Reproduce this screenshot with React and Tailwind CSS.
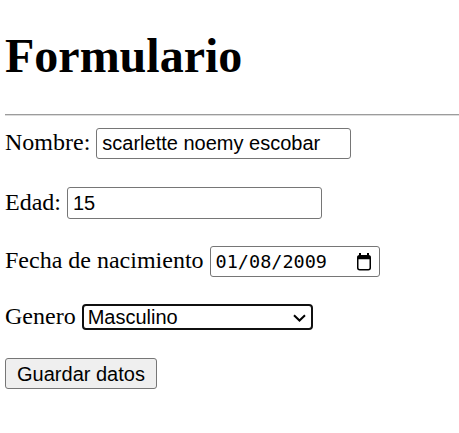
import { useState } from "react";

function CalendarIcon() {
  return (
    <svg width="16" height="18" viewBox="0 0 16 18" className="shrink-0">
      <rect x="3" y="0" width="2" height="4" fill="#000" />
      <rect x="11" y="0" width="2" height="4" fill="#000" />
      <rect x="1.75" y="2.75" width="12.5" height="14" rx="2" fill="none" stroke="#000" strokeWidth="1.5" />
      <rect x="1.75" y="2.75" width="12.5" height="3.5" fill="#000" />
    </svg>
  );
}

export default function App() {
  const [nombre, setNombre] = useState("scarlette noemy escobar");
  const [edad, setEdad] = useState("15");
  const [genero, setGenero] = useState("Masculino");

  return (
    <div className="min-h-screen bg-white text-black pl-[5px] font-['Liberation_Serif',serif] text-[24px]">
      <h1 className="pt-[29px] text-[48px] leading-[53px] font-bold">Formulario</h1>
      <hr className="mt-[32px] h-[2px] border-0 border-t border-b border-t-[#9c9c9c] border-b-[#dcdcdc]" />

      <form onSubmit={(e) => e.preventDefault()}>
        <div className="mt-[12px] flex items-baseline gap-[6px]">
          <label htmlFor="nombre" className="leading-[27px]">Nombre:</label>
          <input
            id="nombre"
            type="text"
            value={nombre}
            onChange={(e) => setNombre(e.target.value)}
            className="w-[255px] h-[31px] px-[5px] border border-[#767676] rounded-[3px] font-['Liberation_Sans',sans-serif] text-[20px] outline-none"
          />
        </div>

        <div className="mt-[28px] flex items-baseline gap-[6px]">
          <label htmlFor="edad" className="leading-[27px]">Edad:</label>
          <input
            id="edad"
            type="text"
            value={edad}
            onChange={(e) => setEdad(e.target.value)}
            className="w-[255px] h-[32px] px-[5px] border border-[#767676] rounded-[3px] font-['Liberation_Sans',sans-serif] text-[20px] outline-none"
          />
        </div>

        <div className="mt-[27px] flex items-baseline gap-[6px]">
          <span className="leading-[27px]">Fecha de nacimiento</span>
          <div className="w-[170px] h-[31px] pl-[5px] pr-[7px] border border-[#767676] rounded-[3px] flex items-center justify-between">
            <span className="font-['DejaVu_Sans_Mono',monospace] text-[18.5px] leading-[29px]">01/08/2009</span>
            <CalendarIcon />
          </div>
        </div>

        <div className="mt-[27px] flex items-start gap-[6px]">
          <label htmlFor="genero" className="leading-[27px] -mt-[1px]">Genero</label>
          <div className="relative">
            <select
              id="genero"
              value={genero}
              onChange={(e) => setGenero(e.target.value)}
              className="block appearance-none w-[231px] h-[26px] pl-[4px] border-2 border-[#101010] rounded-[4px] bg-white font-['Liberation_Sans',sans-serif] text-[20px] leading-[22px] outline-none"
            >
              <option>Masculino</option>
              <option>Femenino</option>
            </select>
            <svg width="13" height="8" viewBox="0 0 13 8" className="absolute right-[7px] top-[10px] pointer-events-none">
              <path d="M1 1.2 L6.5 6.5 L12 1.2" fill="none" stroke="#000" strokeWidth="2" />
            </svg>
          </div>
        </div>

        <button
          type="submit"
          className="mt-[28px] w-[152px] h-[31px] border border-[#767676] rounded-[3px] bg-[#efefef] font-['Liberation_Sans',sans-serif] text-[20px]"
        >
          Guardar datos
        </button>
      </form>
    </div>
  );
}
